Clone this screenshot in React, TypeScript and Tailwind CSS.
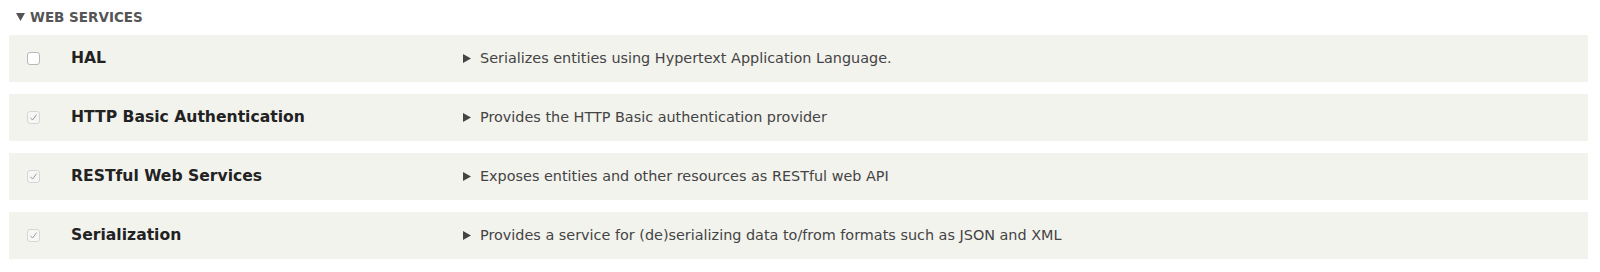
import React from 'react'

const modules = [
  { name: 'HAL', desc: 'Serializes entities using Hypertext Application Language.', checked: false },
  { name: 'HTTP Basic Authentication', desc: 'Provides the HTTP Basic authentication provider', checked: true },
  { name: 'RESTful Web Services', desc: 'Exposes entities and other resources as RESTful web API', checked: true },
  { name: 'Serialization', desc: 'Provides a service for (de)serializing data to/from formats such as JSON and XML', checked: true },
]

const Checkbox = ({ checked }: { checked: boolean }) => {
  if (!checked) {
    return <span className="block w-[13px] h-[13px] rounded-[3px] border border-[#b8b8b8] bg-white" />
  }
  return (
    <span className="flex items-center justify-center w-[13px] h-[13px] rounded-[3px] border border-[#d6d6d6] bg-[#f7f7f5]">
      <svg width="9" height="9" viewBox="0 0 9 9" fill="none">
        <path d="M1.5 4.8 L3.6 7 L7.6 1.6" stroke="#9a9a9a" strokeWidth="1" />
      </svg>
    </span>
  )
}

const App = () => {
  return (
    <div className="w-[1600px] h-[272px] bg-white font-['DejaVu_Sans',sans-serif]">
      <div className="flex items-center h-[34px] pl-[16px] text-[#555] font-bold text-[13.5px]">
        <svg width="9" height="8" viewBox="0 0 9 8" className="mr-[5px]">
          <path d="M0 0 H9 L4.5 8 Z" fill="#555" />
        </svg>
        <span>WEB SERVICES</span>
      </div>
      <div className="flex flex-col gap-[12px] pl-[9px] pr-[12px] pt-[1px]">
        {modules.map((m) => (
          <div key={m.name} className="flex items-center h-[47px] bg-[#f3f3ee]">
            <div className="w-[18px]" />
            <Checkbox checked={m.checked} />
            <div className="w-[31px]" />
            <div className="w-[392px] font-bold text-[15.6px] text-[#222]">{m.name}</div>
            <div className="flex items-center text-[14.4px] text-[#444]">
              <svg width="8" height="9" viewBox="0 0 8 9" className="mr-[9px]">
                <path d="M0 0 L8 4.5 L0 9 Z" fill="#444" />
              </svg>
              <span>{m.desc}</span>
            </div>
          </div>
        ))}
      </div>
    </div>
  )
}

export default App
